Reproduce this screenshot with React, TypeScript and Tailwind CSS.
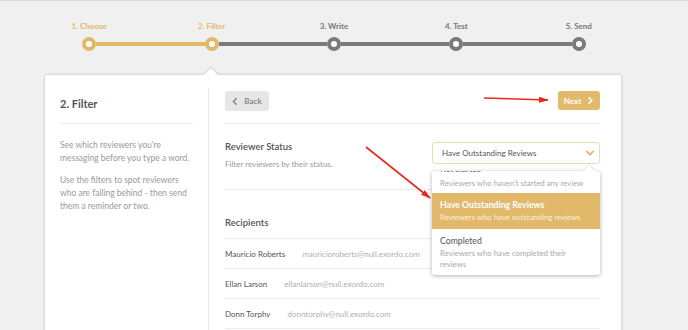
import React from "react";

const GOLD = "#e2b86a";

function Stepper() {
  const steps = ["1. Choose", "2. Filter", "3. Write", "4. Test", "5. Send"];
  return (
    <div className="ml-[28px] w-[612px] grid grid-cols-5 pt-[19px]">
      {steps.map((s, i) => {
        const done = i <= 1;
        const leftGold = i === 1;
        const rightGold = i === 0;
        return (
          <div key={s} className="flex flex-col items-center">
            <div
              className={`text-[8px] leading-[12px] font-bold ${done ? "text-[#e2b86a]" : "text-[#777]"}`}
            >
              {s}
            </div>
            <div className="mt-[5px] flex items-center w-full h-[14px]">
              <div
                className={`flex-1 h-[4px] ${i === 0 ? "bg-transparent" : leftGold ? "bg-[#e2b86a]" : "bg-[#7a7a7a]"}`}
              />
              <div
                className={`w-[14px] h-[14px] rounded-full border-[4px] bg-white ${done ? "border-[#e2b86a]" : "border-[#7a7a7a]"}`}
              />
              <div
                className={`flex-1 h-[4px] ${i === 4 ? "bg-transparent" : rightGold ? "bg-[#e2b86a]" : "bg-[#7a7a7a]"}`}
              />
            </div>
          </div>
        );
      })}
    </div>
  );
}

function Chevron({ dir, color, size = 8, sw = 1.8 }: { dir: "left" | "right" | "down"; color: string; size?: number; sw?: number }) {
  const d = dir === "left" ? "M6 1 L2 5 L6 9" : dir === "right" ? "M3 1 L7 5 L3 9" : "M1 3 L5 7 L9 3";
  return (
    <svg width={size} height={size} viewBox="0 0 10 10" fill="none">
      <path d={d} stroke={color} strokeWidth={sw * (10 / size)} strokeLinecap="round" strokeLinejoin="round" />
    </svg>
  );
}

const recipients = [
  ["Mauricio Roberts", "mauricioroberts@null.exordo.com"],
  ["Ellan Larson", "ellanlarson@null.exordo.com"],
  ["Donn Torphy", "donntorphy@null.exordo.com"],
];

export default function App() {
  return (
    <div
      className="relative w-[688px] h-[330px] overflow-hidden bg-[#f0f0f0] border-t border-[#dcdcdc]"
      style={{ fontFamily: "Lato, 'Open Sans', sans-serif" }}
    >
      <Stepper />

      {/* Card */}
      <div className="relative mt-[24px] ml-[45px] w-[576px] h-[270px] bg-white rounded-t-[3px] shadow-[0_0_3px_rgba(0,0,0,0.25)] flex pt-[13px]">
        {/* caret */}
        <div className="absolute -top-[5px] left-[161px] w-[10px] h-[10px] bg-white rotate-45 shadow-[-1px_-1px_1px_rgba(0,0,0,0.12)]" />
        {/* Sidebar */}
        <div className="w-[163px] px-[15px] pt-[9px]">
          <div className="text-[11px] leading-[14px] font-bold text-[#555] pb-[12px] border-b border-[#ececec]">
            2. Filter
          </div>
          <div className="mt-[15px] text-[8.5px] leading-[13px] text-[#9a9a9a]">
            See which reviewers you're messaging before you type a word.
          </div>
          <div className="mt-[9px] text-[8.5px] leading-[13px] text-[#9a9a9a]">
            Use the filters to spot reviewers who are falling behind - then send them a reminder or two.
          </div>
        </div>

        {/* Main */}
        <div className="w-[413px] border-l border-[#e8e8e8] pl-[16px] pr-[21px] pt-[3px]">
          <div className="flex justify-between items-start pb-[12px] border-b border-[#ececec]">
            <div className="h-[20px] w-[44px] rounded-[3px] bg-[#e6e6e6] flex items-center justify-center gap-[5px]">
              <Chevron dir="left" color="#888" size={7} sw={1.6} />
              <span className="text-[8px] font-bold text-[#888]">Back</span>
            </div>
            <div className="h-[19px] w-[42px] rounded-[3px] bg-[#e2b86a] flex items-center justify-center gap-[6px]">
              <span className="text-[8px] font-bold text-white">Next</span>
              <Chevron dir="right" color="#fff" size={7} sw={1.6} />
            </div>
          </div>

          <div className="flex justify-between pt-[18px] h-[66px] border-b border-[#ececec]">
            <div>
              <div className="text-[9.5px] leading-[12px] text-[#555] font-semibold -mt-[1px]">Reviewer Status</div>
              <div className="mt-[5px] text-[8px] leading-[12px] text-[#9a9a9a]">Filter reviewers by their status.</div>
            </div>
            <div className="w-[168px] h-[22px] border border-[#f0dcb2] rounded-[3px] flex items-center justify-between pl-[9px] pr-[5px]">
              <span className="text-[8px] text-[#555]">Have Outstanding Reviews</span>
              <Chevron dir="down" color={GOLD} size={8} sw={1.8} />
            </div>
          </div>

          <div className="pt-[27px] pb-[9px] border-b border-[#ececec] text-[9.5px] leading-[12px] font-semibold text-[#555]">
            Recipients
          </div>
          {recipients.map(([n, e]) => (
            <div key={n} className="h-[30px] border-b border-[#ececec] flex items-center gap-[17px]">
              <span className="text-[8px] text-[#555]">{n}</span>
              <span className="text-[8px] text-[#b0b0b0]">{e}</span>
            </div>
          ))}
        </div>
      </div>

      {/* Dropdown overlay */}
      <div className="absolute left-[432px] top-[170px] w-[168px] h-[104px] bg-white rounded-[3px] shadow-[0_1px_4px_rgba(0,0,0,0.3)]">
        <div className="absolute -top-[4px] right-[7px] w-[8px] h-[8px] bg-white rotate-45 shadow-[-1px_-1px_1px_rgba(0,0,0,0.1)]" />
        <div className="relative h-[22px] overflow-hidden">
          <div className="absolute left-[8px] -top-[7px] text-[8px] leading-[11px] text-[#555]">Not Started</div>
          <div className="absolute left-[8px] top-[6px] text-[7.8px] leading-[12px] text-[#aaa] whitespace-nowrap">
            Reviewers who haven't started any review
          </div>
        </div>
        <div className="h-[36px] bg-[#e2b86a] px-[8px] pt-[5px]">
          <div className="text-[8.7px] leading-[13px] font-bold text-white">Have Outstanding Reviews</div>
          <div className="text-[7.8px] leading-[12px] text-[#fbf1dc]">Reviewers who have outstanding reviews</div>
        </div>
        <div className="px-[8px] pt-[6px]">
          <div className="text-[8.7px] leading-[12px] text-[#555]">Completed</div>
          <div className="mt-[1px] w-[140px] text-[7.8px] leading-[11px] text-[#aaa]">
            Reviewers who have completed their reviews
          </div>
        </div>
      </div>

      {/* Red arrows */}
      <svg className="absolute left-0 top-0 pointer-events-none" width="688" height="330">
        <defs>
          <marker id="ah" markerWidth="10" markerHeight="6" refX="9" refY="3" orient="auto" markerUnits="userSpaceOnUse">
            <path d="M0 0 L10 3 L0 6 Z" fill="#e8281c" />
          </marker>
        </defs>
        <line x1="484" y1="97" x2="548" y2="99" stroke="#e8281c" strokeWidth="1.6" markerEnd="url(#ah)" />
        <line x1="366" y1="146" x2="430" y2="197" stroke="#e8281c" strokeWidth="1.6" markerEnd="url(#ah)" />
      </svg>
    </div>
  );
}
